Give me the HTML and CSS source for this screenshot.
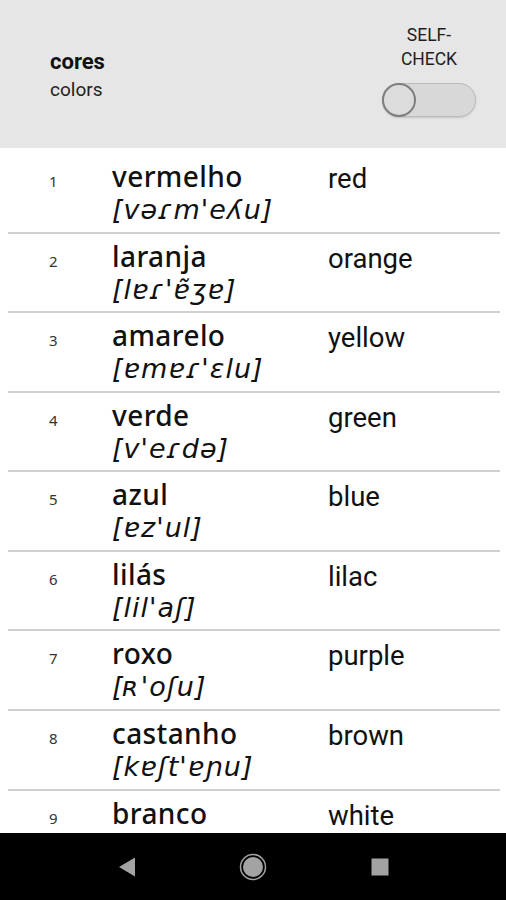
FILE: index.html
```html
<!DOCTYPE html>
<html>
<head>
<meta charset="utf-8">
<link rel="stylesheet" href="styles.css">
</head>
<body>
<div class="screen">
  <header class="header">
    <div class="title">
      <div class="title-pt">cores</div>
      <div class="title-en">colors</div>
    </div>
    <div class="selfcheck">
      <div class="selfcheck-label">SELF-<br>CHECK</div>
      <div class="switch"><div class="knob"></div></div>
    </div>
  </header>
  <main class="list">
    <div class="row"><div class="num">1</div><div class="word"><div class="pt">vermelho</div><div class="ipa">[vəɾm'eʎu]</div></div><div class="en">red</div></div>
    <div class="row"><div class="num">2</div><div class="word"><div class="pt">laranja</div><div class="ipa">[lɐɾ'ɐ̃ʒɐ]</div></div><div class="en">orange</div></div>
    <div class="row"><div class="num">3</div><div class="word"><div class="pt">amarelo</div><div class="ipa">[ɐmɐɾ'ɛlu]</div></div><div class="en">yellow</div></div>
    <div class="row"><div class="num">4</div><div class="word"><div class="pt">verde</div><div class="ipa">[v'eɾdə]</div></div><div class="en">green</div></div>
    <div class="row"><div class="num">5</div><div class="word"><div class="pt">azul</div><div class="ipa">[ɐz'ul]</div></div><div class="en">blue</div></div>
    <div class="row"><div class="num">6</div><div class="word"><div class="pt">lilás</div><div class="ipa">[lil'aʃ]</div></div><div class="en">lilac</div></div>
    <div class="row"><div class="num">7</div><div class="word"><div class="pt">roxo</div><div class="ipa">[ʀ'oʃu]</div></div><div class="en">purple</div></div>
    <div class="row"><div class="num">8</div><div class="word"><div class="pt">castanho</div><div class="ipa">[kɐʃt'ɐɲu]</div></div><div class="en">brown</div></div>
    <div class="row"><div class="num">9</div><div class="word"><div class="pt">branco</div><div class="ipa">[bɾ'ɐ̃ku]</div></div><div class="en">white</div></div>
  </main>
  <nav class="navbar">
    <svg class="nav-icon" width="20" height="22" viewBox="0 0 20 22"><path d="M18 1.5 L18 20.5 L2 11 Z" fill="#a3a3a3"/></svg>
    <svg class="nav-icon" width="28" height="28" viewBox="0 0 28 28"><circle cx="14" cy="14" r="12.5" fill="none" stroke="#a3a3a3" stroke-width="1.5"/><circle cx="14" cy="14" r="10" fill="#a3a3a3"/></svg>
    <svg class="nav-icon" width="18" height="18" viewBox="0 0 18 18"><rect x="0.5" y="0.5" width="17" height="17" fill="#a3a3a3"/></svg>
  </nav>
</div>
</body>
</html>
```
FILE: styles.css
```css
* { box-sizing: border-box; }
html, body { margin: 0; padding: 0; }
body { width: 506px; height: 900px; overflow: hidden; background: #fff; font-family: Roboto, "Noto Sans", sans-serif; color: #111; }
.screen { display: flex; flex-direction: column; height: 900px; }
.header { height: 148px; flex: none; background: #e6e6e6; display: flex; align-items: flex-start; justify-content: space-between; padding: 0 30px 0 50px; }
.title { padding-top: 48px; }
.title-pt { font-size: 22px; font-weight: 700; color: #111; line-height: 28px; }
.title-en { font-size: 19px; color: #222; line-height: 28px; }
.selfcheck { display: flex; flex-direction: column; align-items: center; padding-top: 24px; }
.selfcheck-label { font-size: 17.5px; color: #1e1e1e; text-align: center; line-height: 23.5px; }
.switch { position: relative; margin-top: 12px; width: 94px; height: 34px; border-radius: 17px; background: #d8d8d8; border: 1px solid #bcbcbc; box-shadow: 0 1px 2px rgba(0,0,0,0.15); }
.knob { position: absolute; left: -1px; top: -1px; width: 34px; height: 34px; border-radius: 50%; background: #dcdcdc; border: 2px solid #7e7e7e; }
.list { flex: 1; overflow: hidden; padding-top: 6px; }
.row { display: flex; align-items: flex-start; height: 79.57px; margin: 0 6px 0 8px; border-bottom: 2px solid #d0d0d0; padding-top: 9px; }
.num { width: 104px; padding-left: 41px; font-size: 15px; color: #333; padding-top: 8px; font-family: "Noto Sans", sans-serif; }
.word { width: 216px; }
.pt { font-family: "Noto Sans", sans-serif; font-weight: 500; font-size: 28px; line-height: 30px; color: #111; letter-spacing: 0.4px; margin-top: -2px; }
.ipa { font-family: "DejaVu Sans", sans-serif; font-style: italic; font-size: 27px; line-height: 34px; color: #111; letter-spacing: 1px; margin-top: 2px; }
.en { font-family: Roboto, sans-serif; font-size: 27.5px; line-height: 34px; color: #111; margin-top: -1px; }
.navbar { height: 67px; flex: none; background: #000; display: flex; align-items: center; justify-content: center; }
.nav-icon { display: block; }
.nav-icon:nth-child(1) { margin-right: 102px; }
.nav-icon:nth-child(3) { margin-left: 104px; }
```
